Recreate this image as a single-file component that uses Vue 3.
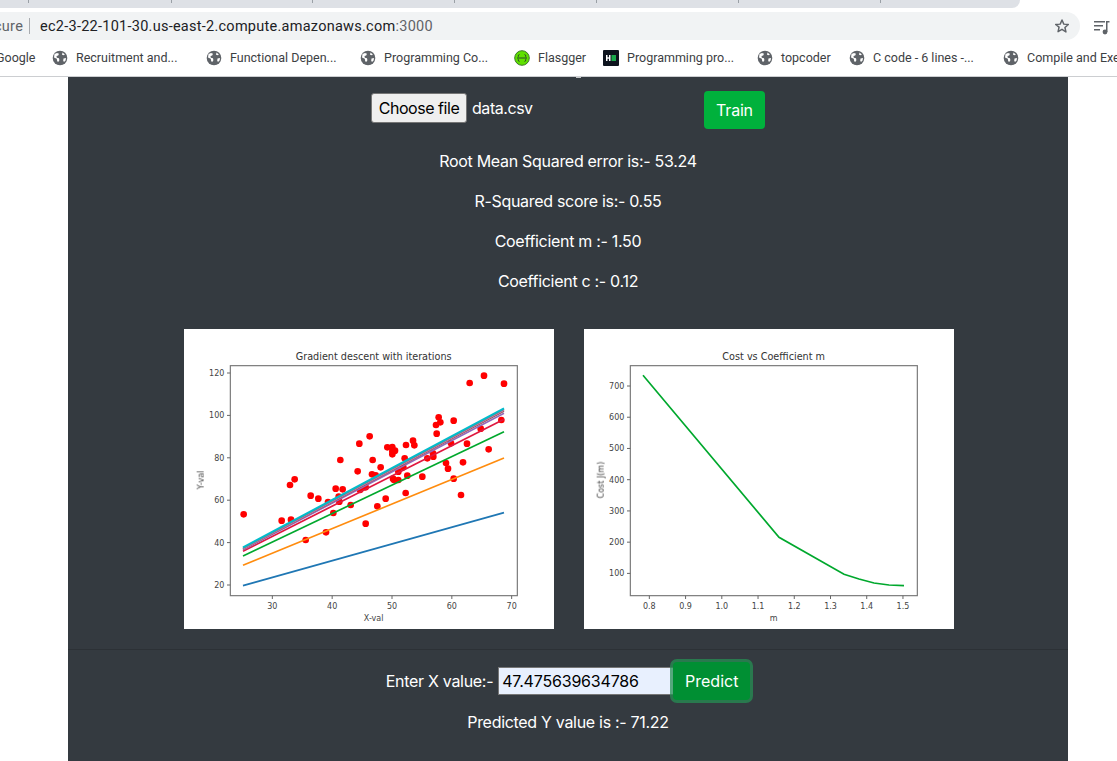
<template>
  <div class="page">
    <div class="tabstrip">
      <i v-for="x in tabDividers" :key="x" class="tabdiv" :style="{ left: x + 'px' }"></i>
    </div>

    <div class="toolbar">
      <div class="omnibox">
        <span class="secure">cure</span>
        <span class="sep"></span>
        <span class="url">ec2-3-22-101-30.us-east-2.compute.amazonaws.com<span class="port">:3000</span></span>
        <svg class="star" width="16" height="16" viewBox="0 0 24 24" fill="none" stroke="#5f6368" stroke-width="2.2" stroke-linejoin="round">
          <path d="M12 3l2.7 6.2 6.8.6-5.1 4.5 1.5 6.7L12 17l-5.9 3.5 1.5-6.7L2.500 9.800l6.800-.6z" />
        </svg>
      </div>
      <svg class="media" width="16" height="16" viewBox="0 0 16 16" fill="#5f6368">
        <rect x="0" y="2" width="11" height="1.500" />
        <rect x="0" y="6" width="9" height="1.500" />
        <rect x="0" y="10" width="6" height="1.500" />
        <rect x="12" y="2" width="1.500" height="11" />
        <rect x="12" y="2" width="3.500" height="1.500" />
        <circle cx="11" cy="13" r="2.400" />
      </svg>
    </div>

    <div class="bookmarks">
      <span class="bm-first">Google</span>
      <div v-for="b in bookmarks" :key="b.label" class="bm" :style="{ width: b.width + 'px' }">
        <svg v-if="b.icon === 'globe'" class="bm-icon" width="16" height="16" viewBox="0 0 16 16">
          <circle cx="8" cy="8" r="7.300" fill="#5f6368" />
          <path d="M2.500 4l2.500-1 2 .8-.8 1.700-1.700.5.300 1.700 2.200.5.400 2-1.200 1.800-1-.8-.4-2.500L2 7.500zM10.500 2.500l2.300 2-.8.8-2-.5zM11.500 8.500l2.500-.4-.4 2.300-1.600 1.600-.8-1.200z" fill="#fff" />
        </svg>
        <svg v-else-if="b.icon === 'flag'" class="bm-icon" width="16" height="16" viewBox="0 0 16 16">
          <circle cx="8" cy="8" r="7.300" fill="#5fe000" stroke="#3d7a2a" stroke-width="1" />
          <path d="M5.500 4.500Q4 4.500 4.300 6.500V7Q4.300 8 3.500 8 4.300 8 4.300 9V9.500Q4 11.500 5.500 11.500M10.500 4.500Q12 4.500 11.700 6.500V7Q11.700 8 12.500 8 11.700 8 11.700 9V9.500Q12 11.500 10.500 11.500M5 8h6" fill="none" stroke="#2e4a2a" stroke-width="1" />
        </svg>
        <svg v-else class="bm-icon" width="16" height="16" viewBox="0 0 16 16">
          <rect width="16" height="16" rx="1" fill="#0e141e" />
          <rect x="3" y="5" width="1.500" height="6" fill="#fff" />
          <rect x="6" y="5" width="1.500" height="6" fill="#fff" />
          <rect x="4" y="7.300" width="2" height="1.400" fill="#fff" />
          <rect x="8.500" y="5" width="4.500" height="6" fill="#1ba94c" />
        </svg>
        <span class="bm-label">{{ b.label }}</span>
      </div>
    </div>

    <main class="panel">
      <i class="heading-tail"></i>
      <div class="file-row">
        <div class="file-input">
          <button class="choose" type="button">Choose file</button>
          <span class="file-name">data.csv</span>
        </div>
        <button class="train" type="button">Train</button>
      </div>

      <p v-for="m in metrics" :key="m" class="metric">{{ m }}</p>

      <div class="charts">
        <svg class="chart" viewBox="0 -3 1110 900" width="370" height="300">
          <rect y="-3" width="1110" height="900" fill="#fff" />
          <text class="title" x="569" y="89" text-anchor="middle">Gradient descent with iterations</text>
          <circle v-for="(p, i) in points" :key="i" :cx="p[0]" :cy="p[1]" r="10" fill="#ff0000" />
          <line v-for="l in fits" :key="l.color" x1="177" :y1="l.y1" x2="960" :y2="l.y2" :stroke="l.color" :stroke-width="l.w" />
          <rect class="frame" x="139" y="107" width="861" height="690" />
          <g v-for="t in gradX" :key="t.label">
            <line class="tick" :x1="t.x" y1="797" :x2="t.x" y2="807" />
            <text class="ticklabel" :x="t.x" y="838" text-anchor="middle">{{ t.label }}</text>
          </g>
          <g v-for="t in gradY" :key="t.label">
            <line class="tick" x1="129" :y1="t.y" x2="139" :y2="t.y" />
            <text class="ticklabel" x="121" :y="t.y + 9" text-anchor="end">{{ t.label }}</text>
          </g>
          <text class="ticklabel" x="569" y="872" text-anchor="middle">X-val</text>
          <text class="ticklabel" transform="translate(59 450) rotate(-90)" text-anchor="middle">Y-val</text>
        </svg>

        <svg class="chart" viewBox="0 -3 1110 900" width="370" height="300">
          <rect y="-3" width="1110" height="900" fill="#fff" />
          <text class="title" x="569" y="89" text-anchor="middle">Cost vs Coefficient m</text>
          <polyline :points="costLine" fill="none" stroke="#00a82d" stroke-width="5" />
          <rect class="frame" x="139" y="107" width="861" height="690" />
          <g v-for="t in costX" :key="t.label">
            <line class="tick" :x1="t.x" y1="797" :x2="t.x" y2="807" />
            <text class="ticklabel" :x="t.x" y="838" text-anchor="middle">{{ t.label }}</text>
          </g>
          <g v-for="t in costY" :key="t.label">
            <line class="tick" x1="129" :y1="t.y" x2="139" :y2="t.y" />
            <text class="ticklabel" x="121" :y="t.y + 9" text-anchor="end">{{ t.label }}</text>
          </g>
          <text class="ticklabel" x="569" y="872" text-anchor="middle">m</text>
          <text class="ticklabel" transform="translate(59 450) rotate(-90)" text-anchor="middle">Cost J(m)</text>
        </svg>
      </div>

      <hr class="rule" />

      <div class="predict-row">
        <label class="predict-label">Enter X value:-</label>
        <input class="x-input" type="text" value="47.475639634786" />
        <button class="predict" type="button">Predict</button>
      </div>
      <p class="result">Predicted Y value is :- 71.22</p>
    </main>
  </div>
</template>

<script setup>
const tabDividers = [28, 171, 312, 454, 596, 738, 880]

const bookmarks = [
  { icon: 'globe', label: 'Recruitment and...', width: 154 },
  { icon: 'globe', label: 'Functional Depen...', width: 154 },
  { icon: 'globe', label: 'Programming Co...', width: 154 },
  { icon: 'flag', label: 'Flasgger', width: 89 },
  { icon: 'hr', label: 'Programming pro...', width: 154 },
  { icon: 'globe', label: 'topcoder', width: 92 },
  { icon: 'globe', label: 'C code - 6 lines -...', width: 154 },
  { icon: 'globe', label: 'Compile and Execute', width: 150 }
]

const metrics = [
  'Root Mean Squared error is:- 53.24',
  'R-Squared score is:- 0.55',
  'Coefficient m :- 1.50',
  'Coefficient c :- 0.12'
]

// scatter points, in the 1110x900 units of the chart viewBox
const points = [
  [179, 553], [293, 572], [321, 569], [318, 465], [332, 448], [365, 630], [380, 497], [403, 506],
  [426, 607], [432, 516], [448, 549], [455, 476], [464, 500], [466, 515], [469, 390], [476, 478],
  [500, 525], [521, 424], [526, 341], [528, 480], [545, 472], [545, 581], [557, 319], [564, 433],
  [566, 390], [575, 436], [580, 529], [590, 412], [605, 506], [610, 352], [625, 351], [625, 364],
  [625, 373], [627, 446], [630, 450], [633, 362], [643, 425], [643, 450], [658, 412], [662, 385],
  [666, 345], [665, 489], [670, 437], [687, 332], [691, 346], [715, 440], [730, 385], [747, 370],
  [748, 380], [756, 285], [758, 311], [764, 262], [769, 277], [786, 399], [792, 416], [801, 340],
  [809, 272], [809, 446], [831, 495], [837, 397], [849, 341], [857, 159], [890, 296], [900, 137],
  [914, 358], [952, 270], [960, 161]
]

const fits = [
  { color: '#1f77b4', y1: 767, y2: 548, w: 5 },
  { color: '#ff8c0e', y1: 706, y2: 384, w: 5 },
  { color: '#00a82d', y1: 678, y2: 305, w: 5 },
  { color: '#e0173f', y1: 664, y2: 268, w: 5 },
  { color: '#9467bd', y1: 659, y2: 250, w: 5 },
  { color: '#8c564b', y1: 657, y2: 243, w: 5 },
  { color: '#e377c2', y1: 656, y2: 240, w: 5 },
  { color: '#7f7f7f', y1: 655, y2: 238, w: 5 },
  { color: '#00bccc', y1: 652, y2: 235, w: 6 }
]

const gradX = [30, 40, 50, 60, 70].map((v, i) => ({ label: v, x: 265 + i * 179.5 }))
const gradY = [120, 100, 80, 60, 40, 20].map((v, i) => ({ label: v, y: 129 + i * 127.2 }))

const costLine = '177,136 585,622 780,733 825,747 870,759 915,765 960,767'
const costX = ['0.8', '0.9', '1.0', '1.1', '1.2', '1.3', '1.4', '1.5'].map((v, i) => ({ label: v, x: 196 + i * 108.7 }))
const costY = [700, 600, 500, 400, 300, 200, 100].map((v, i) => ({ label: v, y: 168 + i * 93.7 }))
</script>

<style scoped>
.page {
  height: 761px;
  display: flex;
  flex-direction: column;
  overflow: hidden;
  background: #fff;
  font-family: Roboto, "Liberation Sans", sans-serif;
}
.tabstrip {
  position: relative;
  flex: none;
  height: 8px;
  width: 1020px;
  background: #dee1e6;
  border-bottom-right-radius: 8px;
}
.tabdiv {
  position: absolute;
  top: 0;
  width: 1px;
  height: 3px;
  background: #9aa0a6;
}
.toolbar {
  flex: none;
  height: 32px;
  display: flex;
  align-items: flex-end;
}
.omnibox {
  width: 1080px;
  height: 28px;
  background: #f1f3f4;
  border-radius: 0 14px 14px 0;
  display: flex;
  align-items: center;
  font-size: 14.5px;
  letter-spacing: 0.26px;
  overflow: hidden;
}
.secure {
  margin-left: -6px;
  width: 24px;
  flex: none;
  color: #5f6368;
}
.sep {
  flex: none;
  width: 1px;
  height: 16px;
  margin: 0 10px 0 11px;
  background: #a8abaf;
}
.url {
  color: #202124;
  white-space: nowrap;
}
.port {
  color: #5f6368;
}
.star {
  margin-left: auto;
  margin-right: 10px;
}
.media {
  margin: 0 0 5px 14px;
}
.bookmarks {
  flex: none;
  height: 36px;
  display: flex;
  align-items: center;
  border-bottom: 1px solid #ccced1;
  font-size: 12.5px;
  color: #3c4043;
  white-space: nowrap;
  overflow: hidden;
}
.bm-first {
  flex: none;
  width: 56px;
  margin-left: -4px;
  margin-top: -1px;
}
.bm {
  flex: none;
  display: flex;
  align-items: center;
  gap: 8px;
}
.bm-icon {
  flex: none;
}
.bm-label {
  margin-top: -1px;
}
.panel {
  position: relative;
  flex: 1;
  width: 1000px;
  margin-left: 68px;
  background: #343a40;
  color: #fff;
  font-family: Inter, "Liberation Sans", sans-serif;
  font-size: 16px;
  letter-spacing: -0.3px;
  text-align: center;
}
.heading-tail {
  position: absolute;
  left: 508px;
  top: 0;
  width: 5px;
  height: 1px;
  background: #c8cacc;
}
.file-row {
  height: 38px;
  margin: 14px 0 20px;
  padding-left: 303px;
  display: flex;
  align-items: center;
  text-align: left;
}
.file-input {
  width: 333px;
  margin-top: -4px;
  display: flex;
  align-items: center;
  gap: 5px;
}
.choose {
  width: 96px;
  height: 30px;
  padding: 0;
  font: inherit;
  letter-spacing: -0.45px;
  color: #000;
  background: #efefef;
  border: 1px solid #767676;
  border-radius: 3px;
}
.file-name {
  color: #fff;
  letter-spacing: -0.45px;
}
.train {
  width: 61px;
  height: 38px;
  padding: 0;
  font: inherit;
  letter-spacing: -0.2px;
  color: #fff;
  background: #00b13c;
  border: none;
  border-radius: 4px;
}
.metric {
  margin: 0 0 16px;
  line-height: 24px;
}
.charts {
  display: flex;
  justify-content: center;
  gap: 30px;
  margin-top: 36px;
  padding-left: 2px;
}
.chart {
  display: block;
  flex: none;
  filter: blur(0.4px);
}
.title {
  font-family: "DejaVu Sans", sans-serif;
  font-size: 29px;
  letter-spacing: 0;
  fill: #333;
}
.ticklabel {
  font-family: "DejaVu Sans", sans-serif;
  font-size: 24px;
  letter-spacing: 0;
  fill: #444;
}
.frame {
  fill: none;
  stroke: #777;
  stroke-width: 3.5;
}
.tick {
  stroke: #666;
  stroke-width: 3;
}
.rule {
  margin: 20px 0 0;
  border: none;
  border-top: 1px solid #2c3136;
}
.predict-row {
  display: flex;
  justify-content: center;
  align-items: center;
  height: 38px;
  margin-top: 12px;
}
.predict-label {
  margin-right: 5px;
}
.x-input {
  box-sizing: border-box;
  width: 175px;
  height: 28px;
  padding: 0 3px;
  font: inherit;
  letter-spacing: -0.2px;
  color: #000;
  background: #e8f0fe;
  border: 1px solid #767676;
  border-width: 1px 0 1px 1px;
  outline: none;
}
.predict {
  width: 77px;
  height: 38px;
  padding: 0;
  font: inherit;
  color: #fff;
  background: #008f33;
  border: none;
  border-radius: 4px;
  box-shadow: 0 0 0 3px rgba(38, 143, 83, 0.75);
}
.result {
  margin: 10px 0 0;
  line-height: 24px;
}
</style>

<style>
html,
body {
  margin: 0;
  overflow: hidden;
}
</style>
